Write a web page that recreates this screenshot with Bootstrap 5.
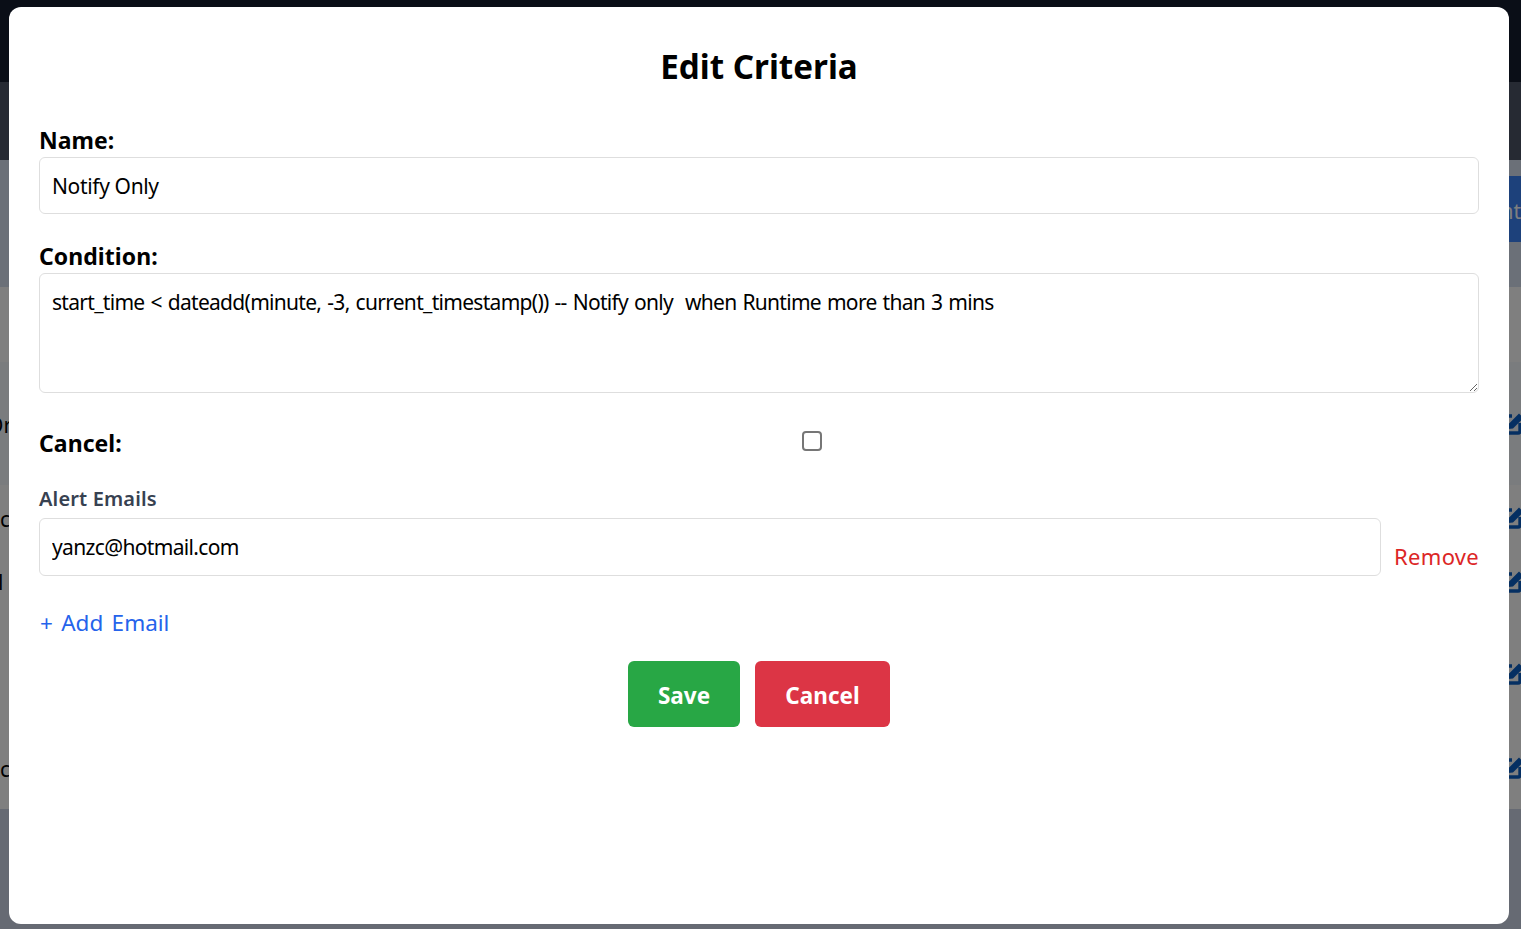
<!DOCTYPE html>
<html lang="en">
<head>
<meta charset="utf-8">
<title>Edit Criteria</title>
<link href="https://cdn.jsdelivr.net/npm/bootstrap@5.3.0/dist/css/bootstrap.min.css" rel="stylesheet">
<style>
html,body{height:929px;overflow:hidden}
body{font-family:"Noto Sans","Open Sans",sans-serif;background:#cdd5e6;color:#000}
.pg-top{height:82px;background:#141c2e}
.pg-sub{height:78px;background:#4c5466}
.pg-tools{height:127px;background:#d6e0f0;padding-top:16px}
.pg-add{height:66px;width:120px;background:#3b82f6;color:#fff;font-size:21px;line-height:70px;text-align:right;white-space:nowrap}
.pg-table{height:522px;background:#fff;font-size:21px}
.pg-head{height:75px}
.pg-row{display:flex;align-items:center;line-height:24px}
.pg-r1{height:123px;background:#f5f9fd}
.pg-r2{height:66px}
.pg-r3{height:61px}
.pg-r4{height:124px}
.pg-r5{height:64px}
.pg-icon{width:28px;height:26px;margin-left:auto;margin-right:-4px;margin-bottom:4px;color:#0b5fc4;flex:none}
.pg-text{white-space:nowrap;color:#000;margin-bottom:-1px}
.pg-o{margin-left:-13px;margin-bottom:-2px}
.pg-c{margin-left:0}
.pg-l{margin-left:-2px;margin-bottom:0}
.crit-backdrop{position:fixed;inset:0;background:rgba(0,0,0,.5);z-index:10}
.crit-dialog{position:fixed;left:9px;top:7px;width:1500px;height:917px;background:#fff;border-radius:12px;z-index:20;padding:30px;overflow:hidden}
.crit-title{font-size:33.2px;font-weight:700;line-height:60px;text-align:center;margin:0 0 29px 0}
.crit-label{font-size:23px;font-weight:700;line-height:29px;display:block;margin:0 0 2px 0;letter-spacing:.05px}
.crit-input.form-control{height:57px;font-size:21px;padding:0 12px;border:1px solid #dedede;border-radius:6px;color:#000;letter-spacing:-.35px;box-shadow:none}
.crit-input.crit-mail.form-control{height:58px;letter-spacing:-.65px}
.crit-area.form-control{height:120px;font-size:21px;padding:13px 12px;line-height:30px;border:1px solid #dedede;border-radius:6px;color:#000;letter-spacing:-.7px;word-spacing:1.2px}
.crit-gap{margin-top:28px}
.crit-cancelrow{display:flex;align-items:center;height:36px;margin-top:33px}
.crit-cancelrow .crit-label{width:50%}
.crit-check.form-check-input{width:20px;height:20px;margin:0 0 0 43px;border:2px solid #767676;border-radius:4px;position:relative;top:-3px}
.crit-sub{font-size:20px;font-weight:600;color:#374151;line-height:28px;margin-top:23px;margin-bottom:5px;letter-spacing:.15px}
.crit-remove{color:#dc2626;font-size:22px;text-decoration:none;margin-left:13px;padding-top:22px;letter-spacing:.3px;white-space:nowrap}
.crit-addlink{display:inline-block;color:#2563eb;font-size:22.5px;text-decoration:none;line-height:32px;margin:31px 0 0 1px;letter-spacing:0;word-spacing:2.5px}
.crit-actions{display:flex;justify-content:center;gap:15px;margin-top:22px}
.crit-btn.btn{height:66px;border:0;border-radius:6px;color:#fff;font-size:22.5px;font-weight:700;padding:3px 0 0;letter-spacing:0}
.crit-save.btn{background:#28a745;width:112px}
.crit-stop.btn{background:#dc3545;width:135px}
</style>
</head>
<body>
<div class="pg-top"></div>
<div class="pg-sub"></div>
<div class="pg-tools d-flex justify-content-end"><div class="pg-add">Add Event</div></div>
<div class="pg-table">
  <div class="pg-head"></div>
  <div class="pg-row pg-r1"><div class="pg-text pg-o">Or</div><svg class="pg-icon" viewBox="0 0 28 26"><path d="M15 7H4a2 2 0 0 0-2 2v13a2 2 0 0 0 2 2h17a2 2 0 0 0 2-2v-8" fill="none" stroke="currentColor" stroke-width="3.4"/><path d="M11 20l.6-5L22 4.6l4.4 4.4L16 19.4zM24 2.6l1.5-1.5a1.5 1.5 0 0 1 2 0l2 2-1.8 3z" fill="currentColor"/></svg></div>
  <div class="pg-row pg-r2"><div class="pg-text pg-c">c</div><svg class="pg-icon" viewBox="0 0 28 26"><path d="M15 7H4a2 2 0 0 0-2 2v13a2 2 0 0 0 2 2h17a2 2 0 0 0 2-2v-8" fill="none" stroke="currentColor" stroke-width="3.4"/><path d="M11 20l.6-5L22 4.6l4.4 4.4L16 19.4zM24 2.6l1.5-1.5a1.5 1.5 0 0 1 2 0l2 2-1.8 3z" fill="currentColor"/></svg></div>
  <div class="pg-row pg-r3"><div class="pg-text pg-l">l</div><svg class="pg-icon" viewBox="0 0 28 26"><path d="M15 7H4a2 2 0 0 0-2 2v13a2 2 0 0 0 2 2h17a2 2 0 0 0 2-2v-8" fill="none" stroke="currentColor" stroke-width="3.4"/><path d="M11 20l.6-5L22 4.6l4.4 4.4L16 19.4zM24 2.6l1.5-1.5a1.5 1.5 0 0 1 2 0l2 2-1.8 3z" fill="currentColor"/></svg></div>
  <div class="pg-row pg-r4"><svg class="pg-icon" viewBox="0 0 28 26"><path d="M15 7H4a2 2 0 0 0-2 2v13a2 2 0 0 0 2 2h17a2 2 0 0 0 2-2v-8" fill="none" stroke="currentColor" stroke-width="3.4"/><path d="M11 20l.6-5L22 4.6l4.4 4.4L16 19.4zM24 2.6l1.5-1.5a1.5 1.5 0 0 1 2 0l2 2-1.8 3z" fill="currentColor"/></svg></div>
  <div class="pg-row pg-r5"><div class="pg-text pg-c">c</div><svg class="pg-icon" viewBox="0 0 28 26"><path d="M15 7H4a2 2 0 0 0-2 2v13a2 2 0 0 0 2 2h17a2 2 0 0 0 2-2v-8" fill="none" stroke="currentColor" stroke-width="3.4"/><path d="M11 20l.6-5L22 4.6l4.4 4.4L16 19.4zM24 2.6l1.5-1.5a1.5 1.5 0 0 1 2 0l2 2-1.8 3z" fill="currentColor"/></svg></div>
</div>
<div class="crit-backdrop"></div>
<div class="crit-dialog" role="dialog">
  <h2 class="crit-title">Edit Criteria</h2>
  <label class="crit-label" for="cName">Name:</label>
  <input id="cName" class="form-control crit-input" value="Notify Only">
  <label class="crit-label crit-gap" for="cCond">Condition:</label>
  <textarea id="cCond" class="form-control crit-area">start_time &lt; dateadd(minute, -3, current_timestamp()) -- Notify only  when Runtime more than 3 mins</textarea>
  <div class="crit-cancelrow"><label class="crit-label" for="cCancel">Cancel:</label><input id="cCancel" type="checkbox" class="form-check-input crit-check"></div>
  <div class="crit-sub">Alert Emails</div>
  <div class="d-flex align-items-start">
    <input class="form-control crit-input crit-mail flex-grow-1" value="yanzc@hotmail.com">
    <a href="#" class="crit-remove">Remove</a>
  </div>
  <a href="#" class="crit-addlink">+ Add Email</a>
  <div class="crit-actions">
    <button class="btn crit-btn crit-save">Save</button>
    <button class="btn crit-btn crit-stop">Cancel</button>
  </div>
</div>
<script src="https://cdn.jsdelivr.net/npm/bootstrap@5.3.0/dist/js/bootstrap.bundle.min.js"></script>
</body>
</html>
